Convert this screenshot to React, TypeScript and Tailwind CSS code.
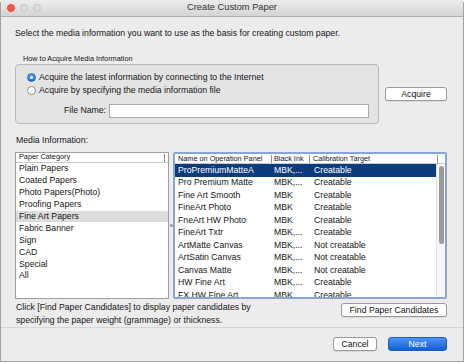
import React from "react";

const categories = [
  "Plain Papers",
  "Coated Papers",
  "Photo Papers(Photo)",
  "Proofing Papers",
  "Fine Art Papers",
  "Fabric Banner",
  "Sign",
  "CAD",
  "Special",
  "All",
];

const media = [
  ["ProPremiumMatteA", "MBK,...", "Creatable"],
  ["Pro Premium Matte", "MBK,...", "Creatable"],
  ["Fine Art Smooth", "MBK", "Creatable"],
  ["FineArt Photo", "MBK", "Creatable"],
  ["FneArt HW Photo", "MBK", "Creatable"],
  ["FineArt Txtr", "MBK,...", "Creatable"],
  ["ArtMatte Canvas", "MBK,...", "Not creatable"],
  ["ArtSatin Canvas", "MBK,...", "Not creatable"],
  ["Canvas Matte", "MBK,...", "Not creatable"],
  ["HW Fine Art", "MBK,...", "Creatable"],
  ["FX HW Fine Art", "MBK,...", "Creatable"],
];

const Radio = ({ on }: { on?: boolean }) =>
  on ? (
    <span className="w-[9px] h-[9px] rounded-full bg-gradient-to-b from-[#5aa0f8] to-[#1a6ae6] border border-[#2a64c4] flex items-center justify-center">
      <span className="w-[3px] h-[3px] rounded-full bg-white" />
    </span>
  ) : (
    <span className="w-[9px] h-[9px] rounded-full bg-white border border-[#8e8e8e]" />
  );

const MacButton = ({ label, className }: { label: string; className: string }) => (
  <button
    className={`h-[14px] rounded-[3px] border border-[#9a9a9a] bg-white text-[8.7px] leading-none text-[#111] shadow-[0_0.5px_0_rgba(0,0,0,0.15)] ${className}`}
  >
    {label}
  </button>
);

export default function App() {
  return (
    <div className="w-[464px] h-[364px] bg-white">
      <div className="w-[464px] h-[362px] bg-[#ececec] border-x border-b border-[#a3a3a3] rounded-t-[4px] overflow-hidden flex flex-col font-['Liberation_Sans',Arial,sans-serif] text-[#151515]">
        {/* title bar */}
        <div className="h-[17px] shrink-0 bg-gradient-to-b from-[#ececec] to-[#d4d4d4] border-b border-[#b1b1b1] flex items-center relative">
          <div className="flex gap-[5px] pl-[6px]">
            <span className="w-[8px] h-[8px] rounded-full bg-[#fc5753] border border-[#df4744]" />
            <span className="w-[8px] h-[8px] rounded-full bg-[#dcdcdc] border border-[#c6c6c6]" />
            <span className="w-[8px] h-[8px] rounded-full bg-[#dcdcdc] border border-[#c6c6c6]" />
          </div>
          <span className="absolute inset-0 flex items-center justify-center text-[9.3px] text-[#333]">
            Create Custom Paper
          </span>
        </div>

        <div className="flex flex-col pl-[14px] pr-[16px]">
          <p className="mt-[11px] text-[8.7px] leading-[11px]">
            Select the media information you want to use as the basis for creating custom paper.
          </p>

          <div className="mt-[16px] flex items-center">
            <div className="w-[364px]">
              <p className="text-[7.3px] leading-[8px] pl-[8px]">How to Acquire Media Information</p>
              <div className="mt-[1px] h-[60px] rounded-[4px] border border-[#b9b9b9] bg-[#e4e4e4] pl-[11px] pt-[6px] pr-[9px]">
                <div className="h-[13px] flex items-center gap-[3px] text-[8.7px]">
                  <Radio on />
                  <span>Acquire the latest information by connecting to the Internet</span>
                </div>
                <div className="h-[13px] flex items-center gap-[3px] text-[8.7px]">
                  <Radio />
                  <span>Acquire by specifying the media information file</span>
                </div>
                <div className="mt-[7px] flex items-center">
                  <span className="w-[82px] text-right text-[8.7px] pr-[3px]">File Name:</span>
                  <div className="flex-1 h-[14px] bg-white border border-[#a9a9a9]" />
                </div>
              </div>
            </div>
            <MacButton label="Acquire" className="ml-[6px] mt-[9px] w-[62px]" />
          </div>

          <p className="mt-[11px] text-[8.7px] leading-[10px] pl-px">Media Information:</p>

          <div className="mt-[7px] flex items-stretch h-[147px]">
            {/* category list */}
            <div className="w-[154px] bg-white border border-[#9f9f9f] flex flex-col">
              <div className="h-[10px] border-b border-[#c9c9c9] flex items-center text-[7.3px] pl-[3px]">
                <span className="flex-1">Paper Category</span>
                <span className="w-px h-[8px] bg-[#8f8f8f] mr-[3px]" />
              </div>
              {categories.map((c) => (
                <div
                  key={c}
                  className={`h-[11.9px] flex items-center pl-[3px] text-[8.7px] ${
                    c === "Fine Art Papers" ? "bg-[#dcdcdc]" : ""
                  }`}
                >
                  {c}
                </div>
              ))}
            </div>

            {/* splitter */}
            <div className="w-[4px] flex items-center justify-center">
              <span className="w-[3px] h-[3px] bg-[#9a9a9a] rounded-full" />
            </div>

            {/* media list */}
            <div className="flex-1 bg-white border-2 border-[#86a6d8] rounded-[2px] flex flex-col overflow-hidden">
              <div className="h-[10px] shrink-0 border-b border-[#c9c9c9] flex items-center text-[7.3px]">
                <span className="w-[97px] pl-[3px] border-r border-[#8f8f8f] h-[8px] leading-[8px]">Name on Operation Panel</span>
                <span className="w-[38px] pl-[2px] border-r border-[#8f8f8f] h-[8px] leading-[8px]">Black Ink</span>
                <span className="w-[128px] pl-[3px] border-r border-[#8f8f8f] h-[8px] leading-[8px]">Calibration Target</span>
                <span className="flex-1" />
              </div>
              <div className="flex flex-1 overflow-hidden">
                <div className="flex-1 overflow-hidden">
                  {media.map(([n, k, c], i) => (
                    <div
                      key={n}
                      className={`h-[12.5px] flex items-center text-[8.7px] ${
                        i === 0 ? "bg-[#0d3b7c] text-white" : ""
                      }`}
                    >
                      <span className="w-[97px] pl-[3px] whitespace-nowrap">{n}</span>
                      <span className="w-[38px] pl-[2px] whitespace-nowrap">{k}</span>
                      <span className="pl-[4px] whitespace-nowrap">{c}</span>
                    </div>
                  ))}
                </div>
                <div className="w-[9px] bg-[#f6f6f6] border-l border-[#e2e2e2] pt-[2px] flex justify-center">
                  <span className="w-[5px] h-[78px] rounded-full bg-[#9b9b9b]" />
                </div>
              </div>
            </div>
          </div>

          <div className="mt-[2px] flex items-start">
            <p className="flex-1 text-[8.7px] leading-[13px] pl-px">
              Click [Find Paper Candidates] to display paper candidates by
              <br />
              specifying the paper weight (grammage) or thickness.
            </p>
            <MacButton label="Find Paper Candidates" className="mt-[2px] w-[106px]" />
          </div>
        </div>

        <div className="border-t border-[#d6d6d6]" />

        <div className="mt-[9px] flex justify-end pr-[16px] gap-[11px]">
          <MacButton label="Cancel" className="w-[44px]" />
          <button className="w-[59px] h-[14px] rounded-[3px] bg-gradient-to-b from-[#4d93f3] to-[#0c5fd6] border border-[#1d5bc0] text-white text-[8.7px] leading-none">
            Next
          </button>
        </div>
      </div>
    </div>
  );
}
